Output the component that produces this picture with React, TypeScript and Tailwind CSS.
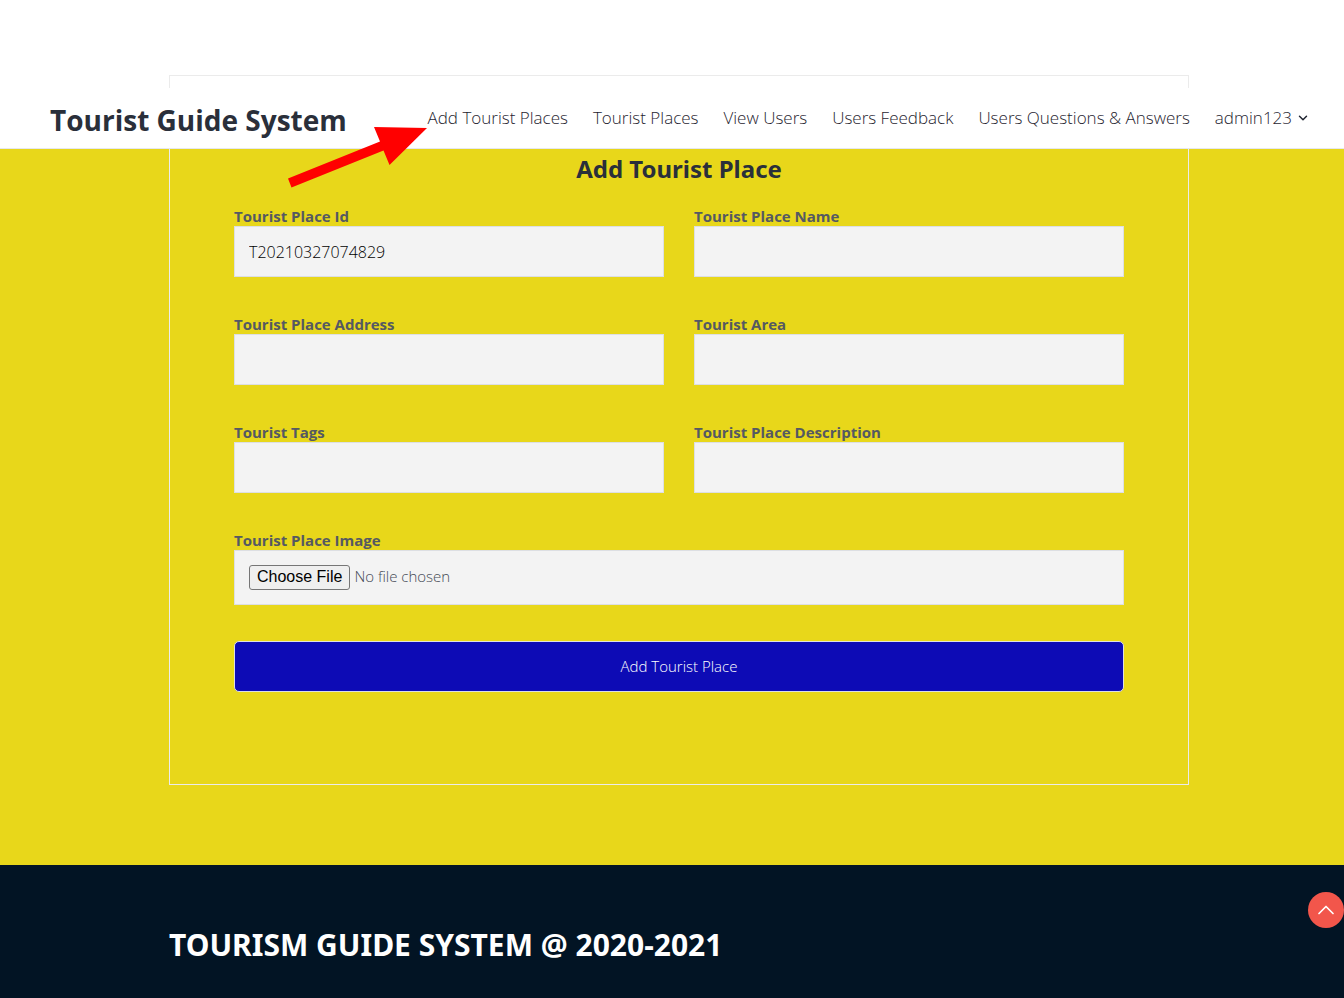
import { ChevronDown, ChevronUp } from "lucide-react";

const links = [
  "Add Tourist Places",
  "Tourist Places",
  "View Users",
  "Users Feedback",
  "Users Questions & Answers",
];

const fields = [
  { id: "place-id", label: "Tourist Place Id", value: "T20210327074829" },
  { id: "place-name", label: "Tourist Place Name", value: "" },
  { id: "place-address", label: "Tourist Place Address", value: "" },
  { id: "area", label: "Tourist Area", value: "" },
  { id: "tags", label: "Tourist Tags", value: "" },
  { id: "description", label: "Tourist Place Description", value: "" },
];

const labelClass =
  "block h-5 text-[15px] leading-5 font-bold text-[#555962] whitespace-nowrap";

function Pointer() {
  return (
    <svg
      className="pointer-events-none absolute left-[286px] top-[36px] z-10"
      width="142"
      height="66"
      viewBox="286 124 142 66"
      fill="#ff0000"
      aria-hidden="true"
    >
      <path d="M288 178.500 L380 141.500 L374 127 L427 128 L389.500 165 L383.500 150.500 L291.500 187.500 Z" />
    </svg>
  );
}

export default function App() {
  return (
    <div className="flex min-h-screen flex-col bg-white font-['Open_Sans','Noto_Sans',sans-serif] font-light">
      <div className="pl-[14px] pt-[75px]">
        <div className="mx-auto h-[13px] max-w-[1020px] border border-b-0 border-[#ebebeb]" />
      </div>

      <header className="relative flex h-[61px] items-center justify-between border-b border-[#e6e8ee] bg-white pl-[50px] pr-[34px]">
        <a
          href="#home"
          className="pt-1 text-[28px] leading-10 font-bold whitespace-nowrap text-[#2a2f3a]"
        >
          Tourist Guide System
        </a>
        <nav className="flex items-center gap-[25px] text-[17px] leading-6 whitespace-nowrap text-[#1f2430]">
          {links.map((text) => (
            <a key={text} href="#nav">
              {text}
            </a>
          ))}
          <button type="button" className="flex items-center gap-1">
            admin123
            <ChevronDown size={14} strokeWidth={2.5} aria-hidden="true" />
          </button>
        </nav>
        <Pointer />
      </header>

      <main className="bg-[#e8d71a] pb-20 pl-[14px]">
        <form
          className="mx-auto max-w-[1020px] border border-t-0 border-[#ebebeb] px-16 pb-[92px]"
          onSubmit={(e) => e.preventDefault()}
        >
          <h1 className="pt-[3px] text-center font-['Noto_Sans',sans-serif] text-[24px] leading-[34px] font-bold text-[#2a2f3a]">
            Add Tourist Place
          </h1>
          <div className="mt-5 grid grid-cols-2 gap-x-[30px] gap-y-[37px]">
            {fields.map((f) => (
              <div key={f.id}>
                <label htmlFor={f.id} className={labelClass}>
                  {f.label}
                </label>
                <input
                  id={f.id}
                  type="text"
                  defaultValue={f.value}
                  className="block h-[51px] w-full border border-[#dddfe3] bg-[#f3f3f3] px-[14px] text-[16px] text-black outline-none"
                />
              </div>
            ))}
            <div className="col-span-2">
              <label htmlFor="image" className={labelClass}>
                Tourist Place Image
              </label>
              <input
                id="image"
                type="file"
                className="block h-[55px] w-full border border-[#dddfe3] bg-[#f3f3f3] px-[14px] py-[13px] text-[15px] leading-[25px] text-[#454a55] file:mr-1 file:h-[25px] file:rounded-[3px] file:border file:border-solid file:border-[#767676] file:bg-[#efefef] file:px-[7px] file:font-['Liberation_Sans',sans-serif] file:text-[16px] file:leading-[22px] file:font-normal file:text-black"
              />
            </div>
          </div>
          <button
            type="submit"
            className="mt-9 block h-[51px] w-full rounded-[5px] border border-[#dddfe3] bg-[#0d0bb5] text-[15px] text-white"
          >
            Add Tourist Place
          </button>
        </form>
      </main>

      <footer className="relative flex-1 bg-[#021424] pb-8 pl-[14px] pt-[60px]">
        <h2 className="mx-auto max-w-[1020px] font-['Noto_Sans',sans-serif] text-[30px] leading-10 font-bold whitespace-nowrap text-white">
          TOURISM GUIDE SYSTEM @ 2020-2021
        </h2>
        <button
          type="button"
          aria-label="Back to top"
          className="absolute right-0 top-[27px] flex size-9 items-center justify-center rounded-full bg-[#f2564b] text-white"
        >
          <ChevronUp size={28} strokeWidth={1.5} aria-hidden="true" />
        </button>
      </footer>
    </div>
  );
}
